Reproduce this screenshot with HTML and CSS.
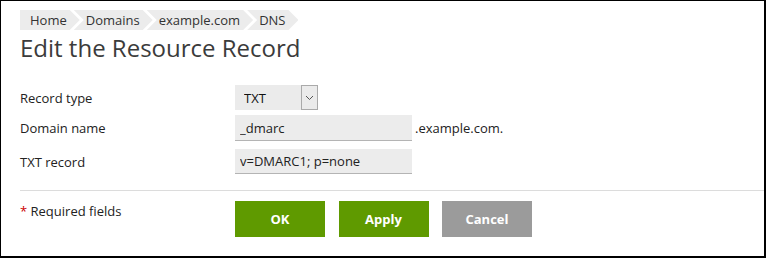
FILE: index.html
```html
<!DOCTYPE html>
<html lang="en">
<head>
<meta charset="utf-8">
<title>Edit the Resource Record</title>
<link rel="stylesheet" href="styles.css">
</head>
<body>
<div class="page">
  <nav class="crumbs">
    <a class="crumb crumb-first" href="#">Home</a>
    <a class="crumb" href="#">Domains</a>
    <a class="crumb" href="#">example.com</a>
    <a class="crumb" href="#">DNS</a>
  </nav>
  <h1 class="title">Edit the Resource Record</h1>
  <form class="form">
    <div class="row row-type">
      <label class="label" for="rtype">Record type</label>
      <div class="select-wrap">
        <select id="rtype" class="select"><option>TXT</option></select>
        <span class="select-arrow"><svg width="9" height="6" viewBox="0 0 9 6"><path d="M1 1l3.5 3.5L8 1" fill="none" stroke="#555" stroke-width="1"/></svg></span>
      </div>
    </div>
    <div class="row row-domain">
      <label class="label" for="dname">Domain name</label>
      <input id="dname" class="input" type="text" value="_dmarc">
      <span class="suffix">.example.com.</span>
    </div>
    <div class="row row-txt">
      <label class="label" for="txt">TXT record</label>
      <input id="txt" class="input" type="text" value="v=DMARC1; p=none">
    </div>
    <div class="footer">
      <div class="required"><span class="star">*</span> Required fields</div>
      <div class="buttons">
        <button type="button" class="btn btn-green">OK</button>
        <button type="button" class="btn btn-green">Apply</button>
        <button type="button" class="btn btn-gray">Cancel</button>
      </div>
    </div>
  </form>
</div>
</body>
</html>
```

FILE: styles.css
```css
* { box-sizing: border-box; }
html, body { margin: 0; padding: 0; background: #fff; }
body {
  font-family: "Open Sans", "Liberation Sans", sans-serif;
  font-size: 13px;
  color: #222;
}
.page {
  width: 766px;
  height: 258px;
  border-left: 1px solid #000;
  border-top: 1px solid #000;
  border-right: 2px solid #000;
  border-bottom: 2px solid #000;
  padding: 9px 0 0 19px;
}
.crumbs {
  display: flex;
  height: 20px;
}
.crumb {
  display: block;
  height: 20px;
  line-height: 20px;
  background: #ececec;
  color: #333;
  text-decoration: none;
  padding: 0 13px 0 12px;
  margin-left: -6px;
  clip-path: polygon(0 0, calc(100% - 10px) 0, 100% 50%, calc(100% - 10px) 100%, 0 100%, 10px 50%);
}
.crumb-first {
  margin-left: 0;
  padding-left: 10px;
  clip-path: polygon(0 0, calc(100% - 10px) 0, 100% 50%, calc(100% - 10px) 100%, 0 100%);
}
.title {
  margin: 2px 0 0;
  font-size: 24px;
  line-height: 32px;
  font-weight: 400;
  color: #3b3b3b;
}
.form {
  margin-top: 21px;
}
.row {
  display: flex;
  align-items: center;
}
.row-type { margin-bottom: 5px; }
.row-domain { margin-bottom: 8px; }
.label {
  width: 215px;
  color: #222;
}
.select-wrap {
  display: flex;
  height: 25px;
}
.select {
  appearance: none;
  -webkit-appearance: none;
  width: 66px;
  height: 25px;
  border: none;
  border-radius: 0;
  background: #ebebeb;
  font: inherit;
  color: #111;
  padding: 0 0 0 9px;
  margin: 0;
}
.select-arrow {
  width: 17px;
  height: 25px;
  border: 1px solid #aaa;
  background: #ebebeb;
  display: flex;
  align-items: center;
  justify-content: center;
}
.input {
  width: 177px;
  height: 26px;
  border: none;
  border-bottom: 1px solid #b4b4b4;
  border-radius: 0;
  background: #ececec;
  font: inherit;
  color: #222;
  padding: 0 5px;
  margin: 0;
}
.row-txt .input { height: 25px; }
.suffix {
  margin-left: 3px;
  color: #222;
}
.footer {
  margin-top: 16px;
  border-top: 1px solid #dcdcdc;
  padding-top: 10px;
  display: flex;
  align-items: flex-start;
}
.required {
  width: 215px;
  line-height: 20px;
  color: #222;
}
.star { color: #c00; }
.buttons {
  display: flex;
  gap: 13.5px;
}
.btn {
  width: 90px;
  height: 36px;
  border: none;
  border-radius: 0;
  font: inherit;
  font-weight: 700;
  color: #fff;
  padding: 0;
  margin: 0;
}
.btn-green { background: #5f9a00; }
.btn-gray { background: #9b9b9b; }
```
